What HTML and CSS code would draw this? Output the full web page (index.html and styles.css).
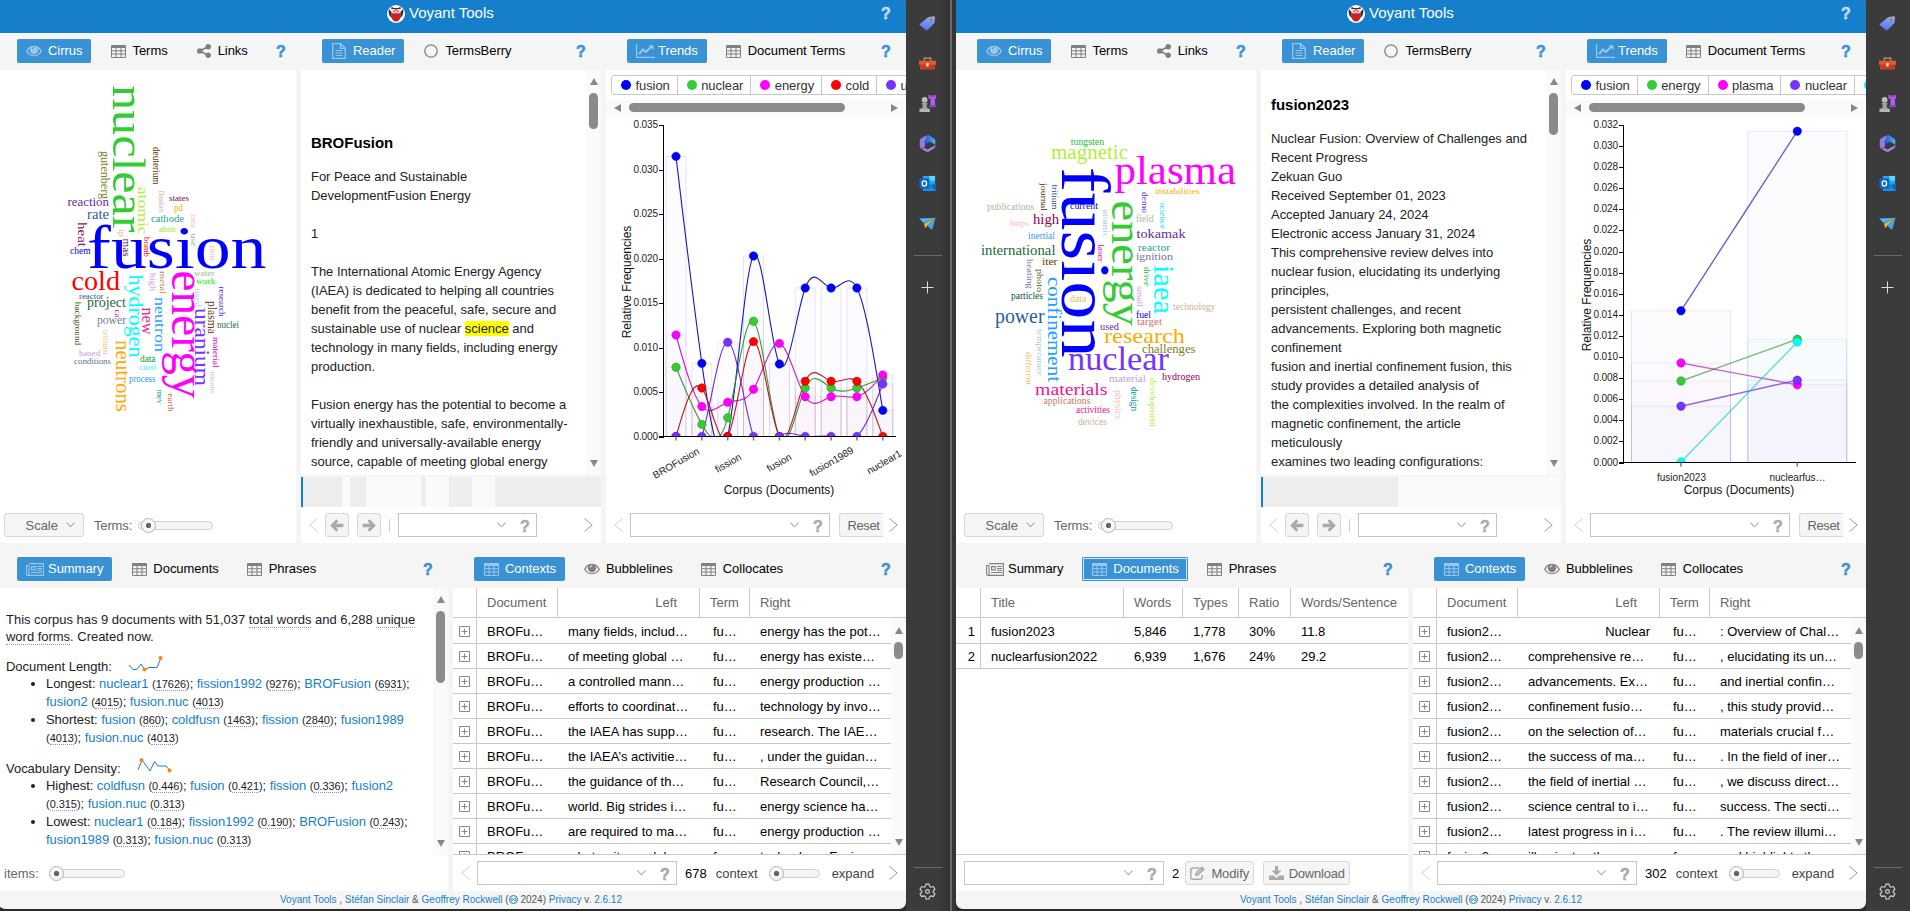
FILE: index.html
```html
<!DOCTYPE html>
<html lang="en">
<head>
<meta charset="utf-8">
<title>Voyant Tools</title>
<link rel="stylesheet" href="styles.css">
</head>
<body>
<svg width="0" height="0" class="sprite">
  <defs>
    <symbol id="i-eye" viewBox="0 0 16 12"><path fill-rule="evenodd" d="M0 6.2C2 2.600 4.800.8 8 .8s6 1.800 8 5.400C14 9.600 11.200 11.300 8 11.300S2 9.600 0 6.200Zm1.500 0C3.200 8.900 5.400 10.200 8 10.200s4.800-1.300 6.500-4c-.9-1.500-2-2.600-3.200-3.300a4 4 0 1 1-6.600 0C3.500 3.600 2.400 4.700 1.500 6.200Zm4.400-1.600h1c0-.9.600-1.500 1.500-1.500v-1C7 2.100 5.900 3.200 5.900 4.600Z"/></symbol>
    <symbol id="i-table" viewBox="0 0 15 13"><path fill-rule="evenodd" d="M1.200 0h12.600c.7 0 1.200.5 1.200 1.200v10.600c0 .7-.5 1.200-1.200 1.200H1.200C.5 13 0 12.500 0 11.800V1.200C0 .5.500 0 1.200 0ZM1 3v2.300h3.500V3Zm4.500 0v2.300h4V3Zm5 0v2.300H14V3ZM1 6.300v2.300h3.500V6.300Zm4.500 0v2.300h4V6.300Zm5 0v2.300H14V6.300ZM1 9.600V12h3.500V9.600Zm4.500 0V12h4V9.600Zm5 0V12H14V9.600Z"/></symbol>
    <symbol id="i-share" viewBox="0 0 14 14"><circle cx="2.800" cy="7" r="2.800"/><circle cx="11.200" cy="2.800" r="2.700"/><circle cx="11.200" cy="11.200" r="2.700"/><path d="M2.800 7 11 2.800M2.800 7l8.200 4.200" fill="none" stroke="currentColor" stroke-width="1.700"/></symbol>
    <symbol id="i-doc" viewBox="0 0 14 16"><path d="M.7.700h8l4.600 4.500v10.100H.7ZM8.500.7v4.700h4.800" fill="none" stroke="currentColor" stroke-width="1.300"/><path d="M3.500 7.500h7M3.500 10h7M3.500 12.500h7" stroke="currentColor" stroke-width="1.100"/></symbol>
    <symbol id="i-circle" viewBox="0 0 14 14"><circle cx="7" cy="7" r="6.200" fill="none" stroke="currentColor" stroke-width="1.300"/></symbol>
    <symbol id="i-line" viewBox="0 0 19 14"><path d="M.6 0v13.400H19" fill="none" stroke="currentColor" stroke-width="1.200"/><path d="m3 10 4-4.500L10 8l5-5" fill="none" stroke="currentColor" stroke-width="2"/><path d="M12.500 1.300h5v5Z"/></symbol>
    <symbol id="i-news" viewBox="0 0 18 13"><path d="M3 .6h14.400v11.800H2.200C1 12.400.6 11.800.6 11V2.500H3M3 2.500v8.700c0 .8-.4 1.200-1 1.200" fill="none" stroke="currentColor" stroke-width="1.100"/><path fill-rule="evenodd" d="M5 3h4.800v4.500H5Zm1.200 1.200v2.100h2.400V4.200Z"/><path d="M11 3.500h5M11 5.500h5M11 7.400h5M5 9.500h11" stroke="currentColor"/></symbol>
    <symbol id="i-left" viewBox="0 0 14 13"><path d="M6.400.200.200 6.500l6.200 6.300 2-2-2.400-2.500H13.300V4.700H6L8.400 2.200Z"/></symbol>
    <symbol id="i-edit" viewBox="0 0 16 14"><path d="M9.500 2H2.800C1.600 2 .8 2.800.8 4v7.200c0 1.200.8 2 2 2H10c1.200 0 2-.8 2-2V9" fill="none" stroke="currentColor" stroke-width="1.500"/><path d="M5 10V7.300L12 .300 14.900 3.200 7.800 10Z"/><path d="m6.500 8.500 5-5" stroke="#f5f5f5" stroke-width=".8"/></symbol>
    <symbol id="i-down" viewBox="0 0 15 14"><path d="M6 0h3v4.500h3.500L7.500 9.500l-5-5H6ZM0 9.500h4.500L7.500 12l3-2.500H15V14H0Z"/></symbol>
    <symbol id="i-chev" viewBox="0 0 9 14"><path d="M8.500.5.800 7l7.700 6.500" fill="none" stroke="currentColor" stroke-width="1"/></symbol>
    <symbol id="i-caret" viewBox="0 0 9 6"><path d="M.5.600 4.500 4.800 8.500.6" fill="none" stroke="currentColor" stroke-width="1.100"/></symbol>
    <symbol id="i-expand" viewBox="0 0 11 11"><path d="M.5.500h10v10H.5ZM2.500 5.500h6M5.500 2.500v6" fill="none" stroke="currentColor"/></symbol>
    <symbol id="i-owl" viewBox="0 0 18 18"><circle cx="9" cy="9" r="9" fill="#fff"/><path d="M2 4 4.500 7l.3 6-1.600-1.500C1.800 10 1.200 7 2 4ZM16 4 13.500 7l-.3 6 1.600-1.500C16.200 10 16.800 7 16 4ZM4.500 1.500 6.500 3h5l2-1.500.3 2.500H4.200Z" fill="#333"/><ellipse cx="9" cy="10" rx="4.800" ry="6.600" fill="#c8202c"/><circle cx="6.700" cy="6.200" r="2.200" fill="#f3d4d4"/><circle cx="11.300" cy="6.200" r="2.200" fill="#f3d4d4"/><circle cx="7.100" cy="6.200" r=".8" fill="#922"/><circle cx="10.900" cy="6.200" r=".8" fill="#922"/><path d="m8.300 7.500.7 1.600.7-1.600Z" fill="#fff"/></symbol>
    <symbol id="i-inf" viewBox="0 0 9 9"><circle cx="4.500" cy="4.500" r="4" fill="none" stroke="currentColor"/><path d="M4.500 4.500c-1-1.500-2.700-1.500-2.700 0s1.700 1.500 2.700 0 2.700-1.500 2.700 0-1.700 1.500-2.700 0Z" fill="none" stroke="currentColor" stroke-width=".9"/></symbol>
    <linearGradient id="g-tag" x1="0" y1="0" x2="0" y2="1"><stop offset="0" stop-color="#87a6fb"/><stop offset="1" stop-color="#5a74ee"/></linearGradient>
    <linearGradient id="g-365" x1="0" y1="0" x2="1" y2="0"><stop offset="0" stop-color="#2e5cd8"/><stop offset="1" stop-color="#43b6f2"/></linearGradient>
    <symbol id="s-tag" viewBox="0 0 18 18"><path d="M10.200 2.200 15.700 1.300c.8-.1 1.300.4 1.300 1.200l-.5 5.300c0 .4-.2.800-.5 1.100l-6.700 7c-.5.500-1.300.6-1.900.1L1.300 11.200c-.6-.5-.6-1.300-.1-1.900l7.700-6.400c.4-.4.800-.6 1.300-.7Z" fill="url(#g-tag)"/><circle cx="13" cy="5" r="1.500" fill="#3b3b3b" stroke="#d9b13a" stroke-width="1.200"/></symbol>
    <symbol id="s-box" viewBox="0 0 18 18"><path d="M5.500 6V3.200h7V6" fill="none" stroke="#a9a39f" stroke-width="1.300"/><path d="M0 6h18v4.500H0Z" fill="#e2582a"/><path d="M1 10.500h16v5H1Z" fill="#c43e1c"/><path d="M7.700 8.500h2.600v2.700a1.300 1.300 0 0 1-2.600 0Z" fill="#ddd"/></symbol>
    <symbol id="s-chess" viewBox="0 0 18 18"><path d="M10 0h2v1.500h1.500V0H15v1.500h1.500V0H18v4h-1.200l.4 7H12l.3-7H10Z" fill="#b05cf0"/><path d="M10.500 11H18v2h-7Z" fill="#9a3fe0"/><circle cx="6" cy="5.200" r="3" fill="#b9b9b9"/><path d="M3 8.500h6v1.600H8c0 2.200.6 3.500 2 4.400H2c1.400-.9 2-2.200 2-4.400H3Z" fill="#a2a2a2"/><path d="M.5 14.500h11V18H.5Z" fill="#b5b5b5"/></symbol>
    <symbol id="s-365" viewBox="0 0 18 18"><path d="M7 .8 2.200 3.600C1.300 4.100.8 5 .8 6v5.500c0 1.500.6 2.500 1.800 3.200l3.700-2.200V6.800c0-.7.3-1.200.9-1.600L12 2.400 10 1C9 .3 8 .2 7 .8Z" fill="#8f7be8"/><path d="M9 0c1.200 0 1.800.3 2.500.8L15.800 3.600c.9.500 1.400 1.400 1.400 2.400v4.200l-4.500-2.700c-.6-.4-1.100-.4-1.700 0L7 9.500V5.300C7 4 8 1 9 0Z" fill="url(#g-365)"/><path d="M2.600 14.700 7.500 17.400c1 .6 2 .6 3 0l5.300-3c.9-.5 1.400-1.300 1.400-2.400v-1.800c-.6 1-1.500 1.500-2.200 1.900L9.800 15c-.6.300-1 .3-1.600 0l-2-1.200Z" fill="#b77bea"/></symbol>
    <symbol id="s-out" viewBox="0 0 18 18"><path d="M4 1h13v9H4Z" fill="#28a8ea"/><path d="M10.500 1H17v5h-6.500Z" fill="#50d9ff"/><path d="M4 9.500 17.500 9v8H4Z" fill="#1490df"/><path d="m12 12 5.500-3v7Z" fill="#0a62b5"/><path d="M.5 3.500h10.500v11H.5Z" fill="#0a66c2"/><ellipse cx="5.700" cy="9" rx="2.300" ry="2.700" fill="none" stroke="#fff" stroke-width="1.400"/></symbol>
    <symbol id="s-plane" viewBox="0 0 18 18"><path d="M.3 3.800 17.600 3 5.500 9.300Z" fill="#3d9fe8"/><path d="M17.600 3 5.500 9.300l1 4.700 2.300-2.500Z" fill="#f2b51d"/><path d="M.8 4 16 3.600 4.500 7.300Z" fill="#58b8f5"/><path d="M17.600 3 8.800 11.500l5 4.500Z" fill="#3fa6f0"/></symbol>
    <symbol id="s-gear" viewBox="0 0 18 18"><path d="M7.300 1.200h3.400l.6 2.400 1.500.9 2.400-.8 1.700 2.900L15.100 8.300v1.500l1.800 1.700-1.700 2.900-2.400-.8-1.500.9-.6 2.400H7.300l-.6-2.400-1.500-.9-2.400.8-1.700-2.900 1.800-1.700V8.300L1.100 6.600l1.700-2.900 2.400.8 1.500-.9Z" fill="none" stroke="#d0d0d0" stroke-width="1.200" stroke-linejoin="round"/><circle cx="9" cy="9" r="2" fill="none" stroke="#d0d0d0" stroke-width="1.200"/></symbol>
  </defs>
</svg>

<div class="desktop">
  <main class="window" id="left"></main>
  <aside class="sidebar sidebar-mid"></aside>
  <main class="window window-right" id="right"></main>
  <aside class="sidebar sidebar-end"></aside>
</div>
<script src="app.js"></script>
</body>
</html>
```

FILE: styles.css
```css
* { box-sizing: border-box; }
html, body { margin: 0; height: 911px; overflow: hidden; background: #2b2b2b; }
body { font: 13px/17px "Liberation Sans", Arial, sans-serif; color: #000; }
a { color: #157fcc; text-decoration: none; }
svg { display: block; fill: currentColor; }
.sprite { position: absolute; }

.desktop { display: flex; width: 1910px; height: 911px; }
.window { flex: none; width: 910px; height: 909px; margin-left: -4px; background: #f5f5f5; display: grid; grid-template-rows: 33px 510px 348px 18px; border-radius: 0 3px 7px 10px; overflow: hidden; }
.window-right { margin-left: 0; border-bottom-left-radius: 7px; }

.sidebar { flex: none; background: #3b3b3b; display: flex; flex-direction: column; padding-top: 3px; color: #ddd; height: 911px; }
.sidebar-mid { width: 50px; background: linear-gradient(90deg, #3b3b3b 0 32px, #333 44px, #6a6a6a 44px 46px, #353535 46px); padding-right: 7px; }
.sidebar-end { width: 44px; padding-right: 1px; }
.side-item { height: 40px; display: flex; align-items: center; justify-content: center; }
.side-item svg { width: 17px; height: 17px; }
.side-rule { width: 28px; height: 1px; background: #6a6a6a; margin: 12px auto 11px; }
.side-bottom { margin-top: auto; padding-bottom: 0; }
.side-bottom .side-rule { margin: 0 auto 3px; }

.topbar { background: #157fcc; color: #fff; display: flex; align-items: center; padding: 0 15px 11px 391px; }
.brand { display: flex; gap: 4px; align-items: center; font-size: 15px; line-height: 18px; padding-top: 3px; }
.brand svg { width: 18px; height: 18px; margin-top: 2px; }
.help { font-size: 16px; line-height: 17px; font-weight: bold; width: 10px; text-align: center; color: #3892d4; -webkit-text-stroke: .5px #3892d4; margin-left: auto; }
.topbar .help { color: #c5dff2; -webkit-text-stroke-color: #c5dff2; padding-top: 4px; }

.cols { display: grid; grid-template-columns: 300px 300px 300px; column-gap: 5px; }
.cols-2 { grid-template-columns: 452px 453px; }
.panel { display: flex; flex-direction: column; min-width: 0; overflow: hidden; }
.tabs { flex: none; height: 37px; padding: 6px 15px 0 21px; display: flex; gap: 10px; }
.cols-2 .tabs { height: 45px; padding-top: 14px; }
.tabs .help { margin-top: 4px; }
.panel-cloud .tabs .help { margin-right: -5px; }
.tab { height: 24px; padding: 0 9px 2px; display: flex; align-items: center; border-radius: 2px; white-space: nowrap; letter-spacing: -.04px; }
.tab .slot { width: 16px; margin-right: 6px; display: flex; justify-content: center; color: #808080; padding-top: 2px; }
.tab .slot svg { flex: none; }
.tab.active { background: #3892d4; color: #fff; }
.tab.active .slot { color: #9ac8ea; }
.tab .slot.wide { justify-content: flex-start; }
.tab.focus { box-shadow: inset 0 0 0 1px #3892d4, inset 0 0 0 2px #d4e8f6; }
.body { flex: 1; min-height: 0; background: #fff; display: flex; flex-direction: column; }
.cloud { width: 300px; height: 437px; font-family: "Liberation Serif", serif; }

.toolbar { flex: none; height: 36px; display: flex; align-items: center; color: #666; white-space: nowrap; background: #fff; }
.toolbar.ruled { border-top: 1px solid #c8c8c8; height: 37px; }
.chev { flex: none; width: 9px; height: 14px; color: #a8a8a8; margin: 0 8px 0 auto; }
.chev.prev { color: #d0d0d0; margin: 0 7px 0 8px; }
.chev.next { transform: scaleX(-1); margin: 0 8px 0 auto; color: #999; }
.btn { flex: none; height: 24px; border: 1px solid #d8d8d8; border-radius: 3px; background: #f5f5f5; display: flex; align-items: center; justify-content: center; color: #666; }
.btn svg { color: #aaa; }
.btn.nav { width: 24px; margin-right: 8px; }
.btn.scale { width: 80px; margin-left: 8px; justify-content: flex-end; padding-right: 8px; gap: 8px; }
.btn.reset { width: 44px; margin-left: 9px; border-right: 0; border-radius: 3px 0 0 3px; padding-left: 4px; letter-spacing: -.4px; }
.btn.modify { width: 69px; margin-left: 6px; gap: 5px; letter-spacing: -.1px; }
.btn.download { width: 87px; margin-left: 9px; gap: 5px; letter-spacing: -.2px; }
.flip { transform: scaleX(-1); }
.vsep { width: 1px; height: 13px; background: #ccc; margin-right: 8px; }
.combo { flex: none; height: 24px; width: 200px; border: 1px solid #c4c4c4; background: #fff; display: flex; align-items: center; justify-content: flex-end; padding-right: 6px; color: #aaa; gap: 14px; }
.combo.short { width: 139px; }
.combo .help { margin: 3px 0 0; color: #aaa; -webkit-text-stroke-color: #aaa; }
.dark { color: #000; }
.mid { color: #444; }
.slider { flex: none; width: 75px; height: 9px; border: 1px solid #d0d0d0; border-radius: 5px; background: #f5f5f5; display: flex; align-items: center; }
.knob { flex: none; width: 15px; height: 15px; border: 1px solid #b4b4b4; border-radius: 50%; background: radial-gradient(circle, #666 0 2.300px, #f7f7f7 3px); margin-left: 2px; }
.slider.tight .knob { margin-left: -2px; }
.terms-label { margin: 0 6px 0 10px; letter-spacing: -.15px; }

.scroll-row { flex: 1; min-height: 0; display: flex; }
.vscroll { flex: none; width: 15px; background: #fafafa; display: flex; flex-direction: column; align-items: center; padding: 8px 0; }
.vscroll::before, .vscroll::after { content: ""; border: 4.500px solid transparent; border-top-width: 0; border-bottom: 7px solid #888; }
.vscroll::after { border-bottom-width: 0; border-top: 7px solid #888; margin-top: auto; }
.thumb { width: 9px; border-radius: 5px; background: #8b8b8b; margin-top: 8px; }
.reader { flex: 1; padding: 0 0 0 10px; line-height: 19px; color: #222; overflow: hidden; white-space: nowrap; letter-spacing: -.03px; }
.reader h3 { font-size: 15px; line-height: 19px; margin: 63px 0 15px; color: #000; }
.window-right .reader h3 { margin-top: 25px; }
.reader p { margin: 0 0 19px; }
mark { background: #ff0; color: #222; padding: 0; }
.segments { flex: none; height: 32px; border-top: 2px solid #f5f5f5; display: flex; background: #fafafa; }
.segments i { background: #eee; }
.segments i:nth-child(odd) { background: #fafafa; }
.segments i.here { background: #157fcc; width: 2px; }

.legend-clip { height: 30px; padding: 5px 0 0 5px; overflow: hidden; flex: none; }
.legend { height: 20px; width: 400px; border: 1px solid #c8c8c8; border-radius: 3px; display: flex; }
.legend span { display: flex; align-items: center; gap: 4.500px; padding: 0 7px 0 9px; border-right: 1px solid #c8c8c8; color: #333; letter-spacing: -.08px; }
.legend b { width: 10px; height: 10px; border-radius: 50%; }
.hscroll { flex: none; height: 15px; background: #fafafa; display: flex; align-items: center; padding: 0 8px; }
.hscroll::before, .hscroll::after { content: ""; border: 4.500px solid transparent; border-left-width: 0; border-right: 7px solid #888; margin-right: 8px; }
.hscroll::after { border-right-width: 0; border-left: 7px solid #888; margin: 0 0 0 auto; }
.hscroll i { width: 216px; height: 9px; border-radius: 5px; background: #8b8b8b; }
.chart { width: 300px; height: 392px; overflow: hidden; }

.summary { flex: 1; padding: 23px 0 0 10px; color: #222; overflow: hidden; white-space: nowrap; letter-spacing: -.02px; }
.summary p { margin: 0 0 13px; }
.summary u { text-decoration: none; border-bottom: 1px dotted #88f; }
.summary h4 { font: inherit; margin: 0; display: flex; gap: 17px; height: 17px; line-height: 17px; }
.summary h4 svg { overflow: visible; fill: none; margin-top: -2px; }
.summary ul { margin: 0 0 13px; padding: 0 0 0 40px; line-height: 18px; letter-spacing: -.05px; }
.summary small { font-size: 11px; line-height: 12px; }

.grid { flex: 1; min-height: 0; display: flex; flex-direction: column; }
.grid-head { flex: none; height: 30px; border-bottom: 1px solid #c8c8c8; color: #666; margin-bottom: 1px; }
.row { display: grid; }
.ctx .row { grid-template-columns: 24px 81px 142px 50px 1fr; }
.docs .row { grid-template-columns: 25px 143px 59px 56px 52px 1fr; }
.row > * { padding: 0 0 0 10px; line-height: 25px; white-space: nowrap; overflow: hidden; }
.grid-head > * { line-height: 30px; border-right: 1px solid #c8c8c8; }
.grid-head > :last-child { border-right: 0; }
.grid-row { height: 25px; border-bottom: 1px solid #c8c8c8; }
.grid-row > :first-child { border-right: 1px solid #c8c8c8; }
.grid-rows { flex: 1; overflow: hidden; min-width: 0; }
.ctx .grid-row > :first-child { padding: 7px 0 0 6px; }
.ctx .grid-row svg { width: 11px; height: 11px; color: #888; }
.ctx .grid-head > :nth-child(3) { text-align: right; padding-right: 22px; }
.ctx .grid-row > :nth-child(4) { padding-left: 13px; }
.docs .grid-row > :first-child { text-align: right; padding-right: 5px; }
.to-right { text-align: right; padding-right: 10px !important; }

.footer { font-size: 10px; line-height: 18px; color: #555; display: flex; justify-content: center; white-space: pre; }
.footer svg { display: inline-block; width: 9px; height: 9px; color: #157fcc; vertical-align: -1px; }
```

FILE: app.js
```js
const icon = (id, w, h, cls = '') => `<svg class="${cls}" width="${w}" height="${h}"><use href="#${id}"/></svg>`;
const SIZES = { 'i-eye': [16, 12], 'i-table': [15, 13], 'i-share': [14, 14], 'i-doc': [14, 16], 'i-circle': [14, 14], 'i-line': [19, 14], 'i-news': [18, 13] };
const help = '<span class="help">?</span>';
const prev = icon('i-chev', 9, 14, 'chev prev');
const next = icon('i-chev', 9, 14, 'chev next');
const combo = (cls = '') => `<div class="combo ${cls}">${icon('i-caret', 9, 6)}${help}</div>`;

function tabs(list, active, focus) {
  return '<nav class="tabs">' + list.map(([label, id], n) => {
    const [w, h] = SIZES[id];
    return `<div class="tab${n === active ? ' active' : ''}${focus && n === active ? ' focus' : ''}"><span class="slot${w > 16 ? ' wide' : ''}">${icon(id, w, h)}</span>${label}</div>`;
  }).join('') + help + '</nav>';
}

function cloud(words, view) {
  return `<svg class="cloud" viewBox="${view}">` + words.map(([t, x, y, len, size, color, v]) =>
    `<text transform="translate(${x} ${y})${v ? ' rotate(90)' : ''}" font-size="${size}" fill="${color}" textLength="${len}" lengthAdjust="spacingAndGlyphs">${t}</text>`).join('') + '</svg>';
}

// Natural cubic spline through equally spaced points, returned as an SVG path.
function spline(xs, ys) {
  const n = ys.length, c = Array(n).fill(0), d = Array(n).fill(0), m = Array(n).fill(0);
  for (let i = 1; i < n - 1; i++) {
    const p = 4 - c[i - 1];
    c[i] = 1 / p;
    d[i] = (6 * (ys[i + 1] - 2 * ys[i] + ys[i - 1]) - d[i - 1]) / p;
  }
  for (let i = n - 2; i > 0; i--) m[i] = d[i] - c[i] * m[i + 1];
  let path = `M${xs[0]} ${ys[0]}`;
  for (let i = 0; i < n - 1; i++) {
    const h = xs[i + 1] - xs[i], dy = ys[i + 1] - ys[i];
    const s0 = dy - (2 * m[i] + m[i + 1]) / 6, s1 = dy + (m[i] + 2 * m[i + 1]) / 6;
    path += `C${xs[i] + h / 3} ${ys[i] + s0 / 3} ${xs[i + 1] - h / 3} ${ys[i + 1] - s1 / 3} ${xs[i + 1]} ${ys[i + 1]}`;
  }
  return path;
}

function chart(o) {
  const top = 125, x0 = 57.5;
  let s = `<svg class="chart" viewBox="0 115 300 392"><defs><clipPath id="${o.id}"><rect x="56" y="115" width="240" height="${o.base - 114.5}"/></clipPath></defs>`;
  s += `<g clip-path="url(#${o.id})">`;
  o.series.forEach(({ color, ys }) => ys.forEach((y, i) => {
    s += `<rect x="${o.xs[i] - o.bar / 2}" y="${y}" width="${o.bar}" height="${Math.max(0, o.base - y)}" fill="${color}" fill-opacity=".012" stroke="${color}" stroke-opacity=".1"/>`;
  }));
  o.series.forEach(({ line, ys }) => {
    s += `<path d="${spline(o.xs, ys)}" fill="none" stroke="${line}" stroke-width="${o.stroke}" stroke-opacity="${o.alpha}"/>`;
  });
  o.series.forEach(({ color, line, ys }) => ys.forEach((y, i) => {
    s += `<circle cx="${o.xs[i]}" cy="${y}" r="4.200" fill="${color}" stroke="${line}" stroke-width=".5"/>`;
  }));
  s += `</g><path d="M${x0} ${top}V${o.base}M53 ${o.base}H290" stroke="#000" fill="none"/><g font-size="10" fill="#222">`;
  for (let i = 0; i <= o.steps; i++) {
    const y = Math.round(top + (o.base - top) * i / o.steps);
    s += `<path d="M53 ${y + .5}h5" stroke="#000"/><text x="52" y="${y + 3}" text-anchor="end" textLength="24.500">${((o.steps - i) * o.step).toFixed(3)}</text>`;
  }
  o.xs.forEach(x => { s += `<path d="M${x} ${o.base}v4" stroke="#777" stroke-width="1.500"/>`; });
  o.labels.forEach(([t, x, y]) => {
    s += `<text transform="translate(${x} ${y})${o.tilt ? ' rotate(-30)' : ''}" dy="3.500" text-anchor="middle">${t}</text>`;
  });
  return s + `</g><g font-size="12" fill="#111" text-anchor="middle"><text x="173" y="494">Corpus (Documents)</text><text transform="translate(25 ${o.titleY}) rotate(-90)">Relative Frequencies</text></g></svg>`;
}

const contextRows = (doc, rows) => rows.map(([l, r]) =>
  `<div class="row grid-row"><span>${icon('i-expand', 11, 11)}</span><span>${doc}</span><span class="${l === 'Nuclear' ? 'to-right' : ''}">${l}</span><span>fu…</span><span>${r}</span></div>`).join('');

const legend = items => '<div class="legend-clip"><div class="legend">' +
  items.map(([t, c]) => `<span><b style="background:${c}"></b>${t}</span>`).join('') + '</div></div>';

function render(o) {
  document.getElementById(o.id).innerHTML = `
  <header class="topbar"><div class="brand">${icon('i-owl', 18, 18)}Voyant Tools</div>${help}</header>
  <div class="cols">
    <section class="panel panel-cloud">${tabs([['Cirrus', 'i-eye'], ['Terms', 'i-table'], ['Links', 'i-share']], 0)}
      <div class="body">${cloud(o.words, o.view)}
        <div class="toolbar"><div class="btn scale">Scale${icon('i-caret', 9, 6)}</div><span class="terms-label">Terms:</span><div class="slider"><span class="knob"></span></div></div>
      </div>
    </section>
    <section class="panel">${tabs([['Reader', 'i-doc'], ['TermsBerry', 'i-circle']], 0)}
      <div class="body">
        <div class="scroll-row"><div class="reader">${o.reader}</div><div class="vscroll"><i class="thumb" style="height:${o.readerThumb}px"></i></div></div>
        <div class="segments"><i class="here"></i>${o.segments.map(w => `<i style="width:${w}px"></i>`).join('')}</div>
        <div class="toolbar">${prev}<div class="btn nav">${icon('i-left', 14, 13)}</div><div class="btn nav">${icon('i-left', 14, 13, 'flip')}</div><span class="vsep"></span>${combo('short')}${next}</div>
      </div>
    </section>
    <section class="panel">${tabs([['Trends', 'i-line'], ['Document Terms', 'i-table']], 0)}
      <div class="body">${legend(o.legend)}<div class="hscroll"><i></i></div>${chart(o.chart)}
        <div class="toolbar">${prev}${combo()}<div class="btn reset">Reset</div>${next}</div>
      </div>
    </section>
  </div>
  <div class="cols cols-2">
    <section class="panel">${tabs([['Summary', 'i-news'], ['Documents', 'i-table'], ['Phrases', 'i-table']], o.lowerTab, o.lowerTab === 1)}
      <div class="body">${o.lower}</div>
    </section>
    <section class="panel">${tabs([['Contexts', 'i-table'], ['Bubblelines', 'i-eye'], ['Collocates', 'i-table']], 0)}
      <div class="body">
        <div class="grid ctx">
          <div class="row grid-head"><span></span><span>Document</span><span>Left</span><span>Term</span><span>Right</span></div>
          <div class="scroll-row"><div class="grid-rows">${contextRows(o.doc, o.contexts)}</div><div class="vscroll"><i class="thumb" style="height:17px"></i></div></div>
        </div>
        <div class="toolbar ruled">${prev}${combo()}<span class="dark" style="margin:0 9px 0 8px">${o.count}</span><span class="mid">context</span><div class="slider tight" style="width:50px;margin:0 12px"><span class="knob"></span></div><span class="mid">expand</span>${next}</div>
      </div>
    </section>
  </div>
  <footer class="footer"><a>Voyant Tools</a> , <a>Stéfan Sinclair</a> &amp; <a>Geoffrey Rockwell</a> (<span>${icon('i-inf', 9, 9)}</span> 2024) <a>Privacy</a> v. <a>2.6.12</a></footer>`;
}

const stat = pairs => pairs.map(p => p === '/' ? '<br>' : `<a>${p[0]}</a> <small>(<u>${p[1]}</u>)</small>`).join('; ').replace(/; <br>; /g, ';<br>');
const spark = (points, a, b) => `<svg width="40" height="17"><polyline points="${points}" stroke="#157fcc"/><circle cx="${a[0]}" cy="${a[1]}" r="2" fill="#ff8800"/><circle cx="${b[0]}" cy="${b[1]}" r="2" fill="#ff8800"/></svg>`;

const summary = `<div class="scroll-row"><div class="summary">
  <p>This corpus has 9 documents with 51,037 <u>total words</u> and 6,288 <u>unique</u><br><u>word forms</u>. Created now.</p>
  <h4>Document Length:${spark('0,9 4,13.500 8,13.500 12,8 16,14 20,11.500 28,11.500 32,2', [15.500, 13.500], [31.500, 2])}</h4>
  <ul><li>Longest: ${stat([['nuclear1', '17626'], ['fission1992', '9276'], ['BROFusion', '6931'], '/', ['fusion2', '4015'], ['fusion.nuc', '4013']])}</li>
  <li>Shortest: <a>fusion</a> <small>(<u>860</u>)</small>; <a>coldfusn</a> <small>(<u>1463</u>)</small>; <a>fission</a> <small>(<u>2840</u>)</small>; <a>fusion1989</a><br><small>(<u>4013</u>)</small>; <a>fusion.nuc</a> <small>(<u>4013</u>)</small></li></ul>
  <h4>Vocabulary Density:${spark('0,12 4,2 12,13 16.500,3.500 20,8 28,8 32,12.500', [3.500, 2], [31.500, 12.500])}</h4>
  <ul><li>Highest: <a>coldfusn</a> <small>(<u>0.446</u>)</small>; <a>fusion</a> <small>(<u>0.421</u>)</small>; <a>fission</a> <small>(<u>0.336</u>)</small>; <a>fusion2</a><br><small>(<u>0.315</u>)</small>; <a>fusion.nuc</a> <small>(<u>0.313</u>)</small></li>
  <li>Lowest: ${stat([['nuclear1', '0.184'], ['fission1992', '0.190'], ['BROFusion', '0.243'], '/', ['fusion1989', '0.313'], ['fusion.nuc', '0.313']])}</li></ul>
  </div><div class="vscroll"><i class="thumb" style="height:72px"></i></div></div>
  <div class="toolbar"><span style="margin:0 11px 0 8px">items:</span><div class="slider"><span class="knob" style="margin-left:-2px"></span></div></div>`;

const documents = `<div class="grid docs">
  <div class="row grid-head"><span></span><span>Title</span><span>Words</span><span>Types</span><span>Ratio</span><span>Words/Sentence</span></div>
  <div class="grid-rows">
    <div class="row grid-row"><span>1</span><span>fusion2023</span><span>5,846</span><span>1,778</span><span>30%</span><span>11.8</span></div>
    <div class="row grid-row"><span>2</span><span>nuclearfusion2022</span><span>6,939</span><span>1,676</span><span>24%</span><span>29.2</span></div>
  </div></div>
  <div class="toolbar ruled" style="padding-left:8px">${combo()}<span class="dark" style="margin-left:8px">2</span><div class="btn modify">${icon('i-edit', 16, 14)}Modify</div><div class="btn download">${icon('i-down', 15, 14)}Download</div></div>`;

render({
  id: 'left', view: '-4 70 300 437', lowerTab: 0, lower: summary, count: 678, readerThumb: 36, doc: 'BROFu…',
  segments: [39, 8, 16, 55, 5, 23, 23, 23, 106],
  words: [
    ['nuclear', 113.3, 85, 147.500, 47, '#33cc33', 1], ['gutenberg', 100.5, 151, 48, 11.500, '#7f7f1a', 1], ['deuterium', 153, 147, 37.500, 9.500, '#5a3c00', 1],
    ['atomic', 137.500, 186.700, 48, 15, '#b3ee3a', 1], ['fission', 159, 190.500, 22, 9, '#c2b09a', 1], ['states', 169, 201, 20, 9, '#800050'],
    ['pd', 174, 211, 9, 9.500, '#ffaa00'], ['cathode', 151, 222, 33, 10, '#2aa198'], ['abstr', 159, 232, 17.500, 9, '#9ae02a'],
    ['iaea', 191, 214, 14, 8, '#ffb8b8', 1], ['use', 191, 233.500, 13, 9, '#9ab09a', 1], ['reaction', 67.500, 206, 41.500, 13, '#6a2a9a'],
    ['rate', 87, 219, 22, 14, '#2a6099'], ['heat', 78, 222, 25, 13, '#8a1a5a', 1], ['chem', 70, 254, 20.500, 10, '#0000ee'],
    ['fusion', 87, 268.200, 179.500, 62, '#0000ff'], ['ip', 119, 229, 8, 9, '#e0c070', 1], ['mas', 122.500, 238.500, 18, 9.500, '#4a2060', 1],
    ['bomb', 143.700, 237, 20, 9, '#ff0000', 1], ['time', 210, 245.500, 16, 9, '#ffb8b8', 1], ['cold', 71.500, 289.700, 48.500, 27, '#ff0000'],
    ['hydrogen', 129, 274.500, 83, 20, '#00ffff', 1], ['high', 149.500, 273, 18, 9, '#c8a0d8', 1], ['metal', 159.500, 271, 23, 9, '#c87860', 1],
    ['energy', 171.700, 270.500, 128, 48, '#ff00ff', 1], ['water', 194, 276, 20.500, 9, '#a0b8a0'], ['work', 196, 284, 19.500, 9, '#00ee00'],
    ['used', 195, 288.500, 18.500, 9, '#a8c8dc', 1], ['research', 218.700, 286.500, 30, 9, '#4422dd', 1], ['reactor', 79, 298.500, 24.500, 9, '#2a5088'],
    ['project', 87, 307, 39, 14, '#1a6a3a'], ['background', 75, 302, 43, 9, '#4a4a10', 1], ['ca', 114.500, 309.500, 8, 9, '#ee0088', 1],
    ['new', 142, 307.500, 27, 16, '#ee1188', 1], ['power', 97, 323.700, 29, 13, '#7a7aa0'], ['neutron', 155.300, 297, 55, 15, '#22a0ff', 1],
    ['uranium', 195, 308, 78, 20, '#7733ff', 1], ['plasma', 207.700, 301, 33, 12, '#6a4010', 1], ['nuclei', 217, 328, 22, 9.500, '#1a6a3a'],
    ['tritium', 103, 330, 24.500, 9, '#e0c878', 1], ['based', 79, 355.500, 21.500, 9, '#c8a0d8'], ['conditions', 74, 364, 37, 9, '#60708a'],
    ['neutrons', 116, 340, 72, 20, '#ffaa00', 1], ['data', 140, 362, 15.500, 10, '#00aa22'], ['cited', 139, 370, 17, 9, '#44eeff'],
    ['process', 129, 382, 26.500, 9.500, '#2299ff'], ['mev', 157, 389.500, 14.500, 9, '#009999', 1], ['earth', 167.700, 393.500, 18, 9, '#c86050', 1],
    ['material', 212.700, 337, 30.500, 9, '#cc00cc', 1], ['means', 210, 371.500, 22.500, 9, '#b0d0e0', 1]
  ],
  reader: `<h3>BROFusion</h3><p>For Peace and Sustainable<br>DevelopmentFusion Energy</p><p>1</p>
    <p>The International Atomic Energy Agency<br>(IAEA) is dedicated to helping all countries<br>benefit from the peaceful, safe, secure and<br>sustainable use of nuclear <mark>science</mark> and<br>technology in many fields, including energy<br>production.</p>
    <p>Fusion energy has the potential to become a<br>virtually inexhaustible, safe, environmentally-<br>friendly and universally-available energy<br>source, capable of meeting global energy</p>`,
  legend: [['fusion', '#0000ff'], ['nuclear', '#33cc33'], ['energy', '#ff00ff'], ['cold', '#ff0000'], ['uranium', '#7733ff']],
  chart: {
    id: 'clip-a', base: 436.500, steps: 7, step: .005, bar: 20, stroke: 1.100, alpha: .9, tilt: true, titleY: 282,
    xs: [70, 95.850, 121.700, 147.500, 173.400, 199.200, 225.100, 250.900, 276.800],
    labels: [['BROFusion', 70, 463], ['fission', 122, 463], ['fusion', 173, 462.500], ['fusion1989', 225.500, 461.500], ['nuclear1', 278, 462]],
    series: [
      { color: '#0000ff', line: '#0000b3', ys: [156.400, 363.400, 436.500, 256, 364, 288, 288, 288, 410.400] },
      { color: '#33cc33', line: '#248f24', ys: [367.200, 424.400, 417.700, 321.300, 436.500, 388, 388, 388, 378] },
      { color: '#ff00ff', line: '#c000c0', ys: [335, 406.500, 402.300, 389.300, 343.400, 396.700, 396.700, 396.700, 375] },
      { color: '#ff0000', line: '#b80000', ys: [436.500, 388, 436.500, 341.600, 436.500, 381.300, 381.300, 381.300, 436.500] },
      { color: '#7733ff', line: '#5a18d8', ys: [436.500, 436.500, 342.300, 436.500, 436.500, 436.500, 436.500, 436.500, 384] }
    ]
  },
  contexts: [['many fields, includ…', 'energy has the pot…'], ['of meeting global …', 'energy has existe…'], ['a controlled mann…', 'energy production …'],
    ['efforts to coordinat…', 'technology by invo…'], ['the IAEA has supp…', 'research. The IAE…'], ['the IAEA’s activitie…', ', under the guidan…'],
    ['the guidance of th…', 'Research Council,…'], ['world. Big strides i…', 'energy science ha…'], ['are required to ma…', 'energy production …'], ['what quite model…', 'technology. Fusi…']]
});

render({
  id: 'right', view: '956 70 300 437', lowerTab: 1, lower: documents, count: 302, readerThumb: 42, doc: 'fusion2…',
  segments: [135, 163],
  words: [
    ['tungsten', 1070.700, 145, 33.500, 10, '#22bb33'], ['magnetic', 1051, 159, 77, 20, '#b3ee3a'], ['plasma', 1114.500, 184, 121.500, 40, '#ff00ff'],
    ['instabilities', 1155, 194, 44.500, 9, '#ffaa00'], ['fusion', 1062, 167, 190.500, 69, '#0000ff', 1], ['current', 1070, 208.500, 28, 9.500, '#0000cc'],
    ['journal', 1040.500, 183, 28, 9, '#4a2a00', 1], ['tritium', 1052, 184.500, 25, 9, '#2a5088', 1], ['publications', 987, 210, 47, 9.500, '#a8b8a0'],
    ['https', 1010, 226, 19, 9, '#ffb8c4'], ['high', 1033, 224, 26, 14, '#880055'], ['inertial', 1028, 239, 27, 9.500, '#3399ee'],
    ['international', 981, 254.700, 74.500, 14, '#1a6a3a'], ['iter', 1042, 265, 15.500, 11, '#5a3a00'], ['heating', 1027, 259, 29.500, 9, '#7070a0', 1],
    ['photo', 1036.700, 269, 23, 9, '#555510', 1], ['particles', 1011, 299, 32, 9.500, '#005533'], ['power', 995, 323.300, 49.500, 21, '#2a6099'],
    ['confinement', 1048.300, 277, 105, 19, '#22a0ff', 1], ['data', 1070, 302, 16.500, 10, '#e0c070'], ['atomic', 1102.500, 209.500, 28, 9, '#a8c8dc', 1],
    ['laser', 1098, 244, 18, 9, '#ee00aa', 1], ['energy', 1112, 200.500, 125.500, 44, '#33cc33', 1], ['demo', 1142, 192, 21, 9, '#5533cc', 1],
    ['science', 1159.500, 202, 27, 9, '#22e0f0', 1], ['field', 1136, 221.500, 17.500, 9.500, '#a8b8a0'], ['tokamak', 1136.500, 238, 49, 13, '#6a2a9a'],
    ['reactor', 1138, 250.500, 32, 11, '#2aa198'], ['ignition', 1136, 260, 37, 11, '#7070a0'], ['drive', 1144, 267, 19, 9, '#22bb33', 1],
    ['iaea', 1154.300, 265, 49, 30, '#00ffff', 1], ['small', 1137, 286, 21, 9, '#c8a0d8', 1], ['technology', 1173, 309.500, 42.500, 10, '#c8b098'],
    ['fuel', 1136, 317.500, 15, 10, '#0000cc'], ['target', 1137, 325, 25, 11, '#cc7766'], ['used', 1100, 330, 19, 9.500, '#6a2a9a'],
    ['research', 1104, 343, 81, 22, '#ffaa00'], ['challenges', 1142, 353, 53.500, 12.500, '#7f7f1a'], ['nuclear', 1068, 370.300, 101, 33, '#7733ff'],
    ['material', 1109, 381.500, 37, 10.500, '#c8a0d8'], ['hydrogen', 1162, 380, 38, 10, '#880055'], ['materials', 1035, 394.700, 72.500, 17, '#ee1199'],
    ['applications', 1043.500, 404, 47, 10, '#cc7766'], ['activities', 1076, 413, 34, 9.500, '#ee1188'], ['devices', 1078, 425, 29, 9.500, '#c8b098'],
    ['temperature', 1036.700, 329, 46.500, 9, '#a8c8dc', 1], ['different', 1026, 352, 33, 9, '#e0c070', 1], ['physics', 1115, 390, 29, 9.500, '#ffb8c4', 1],
    ['design', 1131, 387, 24, 9.500, '#009999', 1], ['development', 1150, 378, 49, 9, '#b3ee3a', 1]
  ],
  reader: `<h3>fusion2023</h3><p>Nuclear Fusion: Overview of Challenges and<br>Recent Progress<br>Zekuan Guo<br>Received September 01, 2023<br>Accepted January 24, 2024<br>Electronic access January 31, 2024<br>This comprehensive review delves into<br>nuclear fusion, elucidating its underlying<br>principles,<br>persistent challenges, and recent<br>advancements. Exploring both magnetic<br>confinement<br>fusion and inertial confinement fusion, this<br>study provides a detailed analysis of<br>the complexities involved. In the realm of<br>magnetic confinement, the article<br>meticulously<br>examines two leading configurations:</p>`,
  legend: [['fusion', '#0000ff'], ['energy', '#33cc33'], ['plasma', '#ff00ff'], ['nuclear', '#7733ff'], ['iaea', '#00ffff']],
  chart: {
    id: 'clip-b', base: 462.500, steps: 16, step: .002, bar: 99, stroke: 1.400, alpha: .6, titleY: 295,
    xs: [115, 231.300], labels: [['fusion2023', 115.500, 477], ['nuclearfus…', 231.500, 477]],
    series: [
      { color: '#0000ff', line: '#0000b3', ys: [310.800, 131.200] }, { color: '#33cc33', line: '#248f24', ys: [381, 339.200] },
      { color: '#ff00ff', line: '#b000b0', ys: [363, 384.800] }, { color: '#7733ff', line: '#4a10d0', ys: [406.200, 380.200] },
      { color: '#00ffff', line: '#00c8c8', ys: [462, 342] }
    ]
  },
  contexts: [['Nuclear', ': Overview of Chal…'], ['comprehensive re…', ', elucidating its un…'], ['advancements. Ex…', 'and inertial confin…'],
    ['confinement fusio…', ', this study provid…'], ['on the selection of…', 'materials crucial f…'], ['the success of ma…', '. In the field of iner…'],
    ['the field of inertial …', ', we discuss direct…'], ['science central to i…', 'success. The secti…'], ['latest progress in i…', '. The review illumi…'], ['illuminates the…', 'and highlights th…']]
});

document.querySelectorAll('.sidebar').forEach(el => {
  el.innerHTML = ['s-tag', 's-box', 's-chess', 's-365', 's-out', 's-plane'].map(id => `<div class="side-item">${icon(id, 17, 17)}</div>`).join('') +
    '<div class="side-rule"></div><div class="side-item"><svg viewBox="0 0 17 17"><path d="M8.500 2.500v12M2.500 8.500h12" stroke="#ddd" fill="none"/></svg></div>' +
    `<div class="side-bottom"><div class="side-rule"></div><div class="side-item">${icon('s-gear', 17, 17)}</div></div>`;
});
```
